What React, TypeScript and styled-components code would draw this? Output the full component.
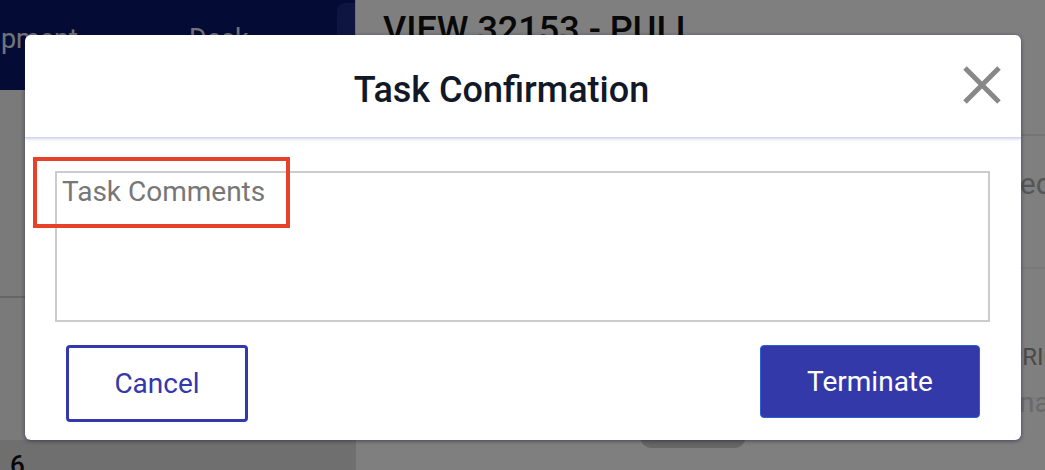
import React from "react";
import styled, { createGlobalStyle } from "styled-components";

const GlobalStyle = createGlobalStyle`
  html, body {
    margin: 0;
    padding: 0;
    width: 1045px;
    height: 470px;
    overflow: hidden;
    background: #fff;
    font-family: Roboto, "Noto Sans", "Liberation Sans", sans-serif;
  }
  * { box-sizing: border-box; }
`;

const Shell = styled.div`
  position: relative;
  display: grid;
  grid-template-columns: 355px 1fr;
  width: 1045px;
  height: 470px;
  overflow: hidden;
`;

const Sidebar = styled.aside`
  display: flex;
  flex-direction: column;
  background: #f4f4f4;
`;

const SideHeader = styled.div`
  height: 90px;
  flex: none;
  background: #08166a;
  padding-top: 3px;
  overflow: hidden;
`;

const TabStrip = styled.div`
  display: flex;
  height: 100%;
  margin-left: -125px;
`;

const Tab = styled.div<{ $active?: boolean; $pad?: number }>`
  flex: none;
  width: 231px;
  padding: 20px 0 0 ${(p) => p.$pad ?? 83}px;
  font-size: 27px;
  color: #e4e6f2;
  white-space: nowrap;
  background: ${(p) => (p.$active ? "#1a2a80" : "transparent")};
  border-top-left-radius: ${(p) => (p.$active ? "8px" : "0")};
`;

const SideSection = styled.div`
  height: 208px;
  flex: none;
  border-bottom: 2px solid #cccccc;
`;

const SideSpacer = styled.div`
  flex: 1;
`;

const SideFooter = styled.div`
  height: 30px;
  flex: none;
  background: #dedede;
  padding: 10px 0 0 10px;
  font-size: 26px;
  font-weight: 500;
  color: #111;
  line-height: 30px;
`;

const Main = styled.main`
  display: flex;
  flex-direction: column;
  background: #fff;
  border-left: 1px solid #e0e0e0;
`;

const MainTitle = styled.h1`
  margin: 0;
  height: 136px;
  flex: none;
  padding: 9px 0 0 27px;
  font-size: 36px;
  font-weight: 500;
  color: #111;
  border-bottom: 2px solid #e8e8e8;
  white-space: nowrap;
`;

const InfoRow = styled.div<{ $h: number; $top: number }>`
  height: ${(p) => p.$h}px;
  flex: none;
  display: flex;
  flex-direction: column;
  gap: 16px;
  padding: ${(p) => p.$top}px 0 0 587px;
  border-bottom: 2px solid #f4f4f4;
  white-space: nowrap;
`;

const InfoText = styled.div<{ $tone: string; $size: number; $shift?: number }>`
  font-size: ${(p) => p.$size}px;
  line-height: ${(p) => p.$size + 4}px;
  color: ${(p) => p.$tone};
  margin-left: ${(p) => p.$shift ?? 0}px;
`;

const PillButton = styled.div`
  margin: auto 0 22px 284px;
  width: 106px;
  height: 48px;
  border-radius: 12px;
  background: #cccccc;
`;

const Overlay = styled.div`
  position: absolute;
  inset: 0;
  background: rgba(0, 0, 0, 0.5);
  padding: 35px 0 0 25px;
`;

const Modal = styled.div`
  width: 996px;
  background: #fff;
  border-radius: 6px;
  box-shadow: 0 1px 4px rgba(20, 20, 60, 0.55);
  overflow: hidden;
`;

const ModalHeader = styled.header`
  display: flex;
  align-items: center;
  height: 103px;
  padding-right: 19px;
  border-bottom: 1px solid #d4d4f2;
  box-shadow: 0 1px 3px rgba(110, 110, 220, 0.35);
`;

const ModalTitle = styled.h2`
  flex: 1;
  margin: 8px 0 0 0;
  padding-left: 16px;
  text-align: center;
  font-size: 36px;
  font-weight: 500;
  color: #111827;
`;

const CloseButton = styled.button`
  flex: none;
  margin-bottom: 2px;
  width: 40px;
  height: 40px;
  padding: 0;
  border: none;
  background: transparent;
  display: flex;
  cursor: pointer;
`;

const ModalBody = styled.div`
  position: relative;
  padding: 33px 31px 18px 30px;
`;

const Comments = styled.textarea`
  display: block;
  width: 935px;
  height: 151px;
  border: 2px solid #cccccc;
  border-radius: 0;
  padding: 2px 5px;
  font-family: Roboto, "Noto Sans", sans-serif;
  font-size: 28px;
  color: #333;
  resize: none;
  outline: none;
  &::placeholder {
    color: #777777;
  }
`;

const Highlight = styled.div`
  position: absolute;
  left: 8px;
  top: 19px;
  width: 257px;
  height: 71px;
  border: 4px solid #e8412b;
  pointer-events: none;
`;

const ButtonRow = styled.div`
  display: flex;
  justify-content: space-between;
  align-items: flex-start;
  margin-top: 23px;
  padding: 0 10px 0 11px;
`;

const ActionButton = styled.button<{ $primary?: boolean }>`
  width: ${(p) => (p.$primary ? 220 : 182)}px;
  height: ${(p) => (p.$primary ? 73 : 77)}px;
  border-radius: 4px;
  border: ${(p) => (p.$primary ? "1px solid #2c5fd2" : "3px solid #3338aa")};
  background: ${(p) => (p.$primary ? "#3339a9" : "#ffffff")};
  color: ${(p) => (p.$primary ? "#ffffff" : "#3338aa")};
  font-family: Roboto, "Noto Sans", sans-serif;
  font-size: 28px;
  padding: 0;
  cursor: pointer;
`;

const CloseIcon = () => (
  <svg width="40" height="40" viewBox="0 0 40 40">
    <path d="M3 3 L37 37 M37 3 L3 37" stroke="#888888" strokeWidth="5" />
  </svg>
);

export default function App() {
  return (
    <>
      <GlobalStyle />
      <Shell>
        <Sidebar>
          <SideHeader>
            <TabStrip>
              <Tab $pad={74}>Equipment</Tab>
              <Tab>Desk</Tab>
              <Tab $active>Tasks</Tab>
            </TabStrip>
          </SideHeader>
          <SideSection />
          <SideSpacer />
          <SideFooter>6</SideFooter>
        </Sidebar>
        <Main>
          <MainTitle>VIEW 32153 - PULL</MainTitle>
          <InfoRow $h={133} $top={31}>
            <InfoText $tone="#acacac" $size={30} $shift={-36}>Completed</InfoText>
          </InfoRow>
          <InfoRow $h={130} $top={74}>
            <InfoText $tone="#929292" $size={24} $shift={64}>PRIORITY</InfoText>
            <InfoText $tone="#d4d4d4" $size={28} $shift={5}>Terminal</InfoText>
          </InfoRow>
          <PillButton />
        </Main>
        <Overlay>
          <Modal role="dialog" aria-label="Task Confirmation">
            <ModalHeader>
              <ModalTitle>Task Confirmation</ModalTitle>
              <CloseButton aria-label="Close">
                <CloseIcon />
              </CloseButton>
            </ModalHeader>
            <ModalBody>
              <Comments placeholder="Task Comments" />
              <Highlight />
              <ButtonRow>
                <ActionButton>Cancel</ActionButton>
                <ActionButton $primary>Terminate</ActionButton>
              </ButtonRow>
            </ModalBody>
          </Modal>
        </Overlay>
      </Shell>
    </>
  );
}
